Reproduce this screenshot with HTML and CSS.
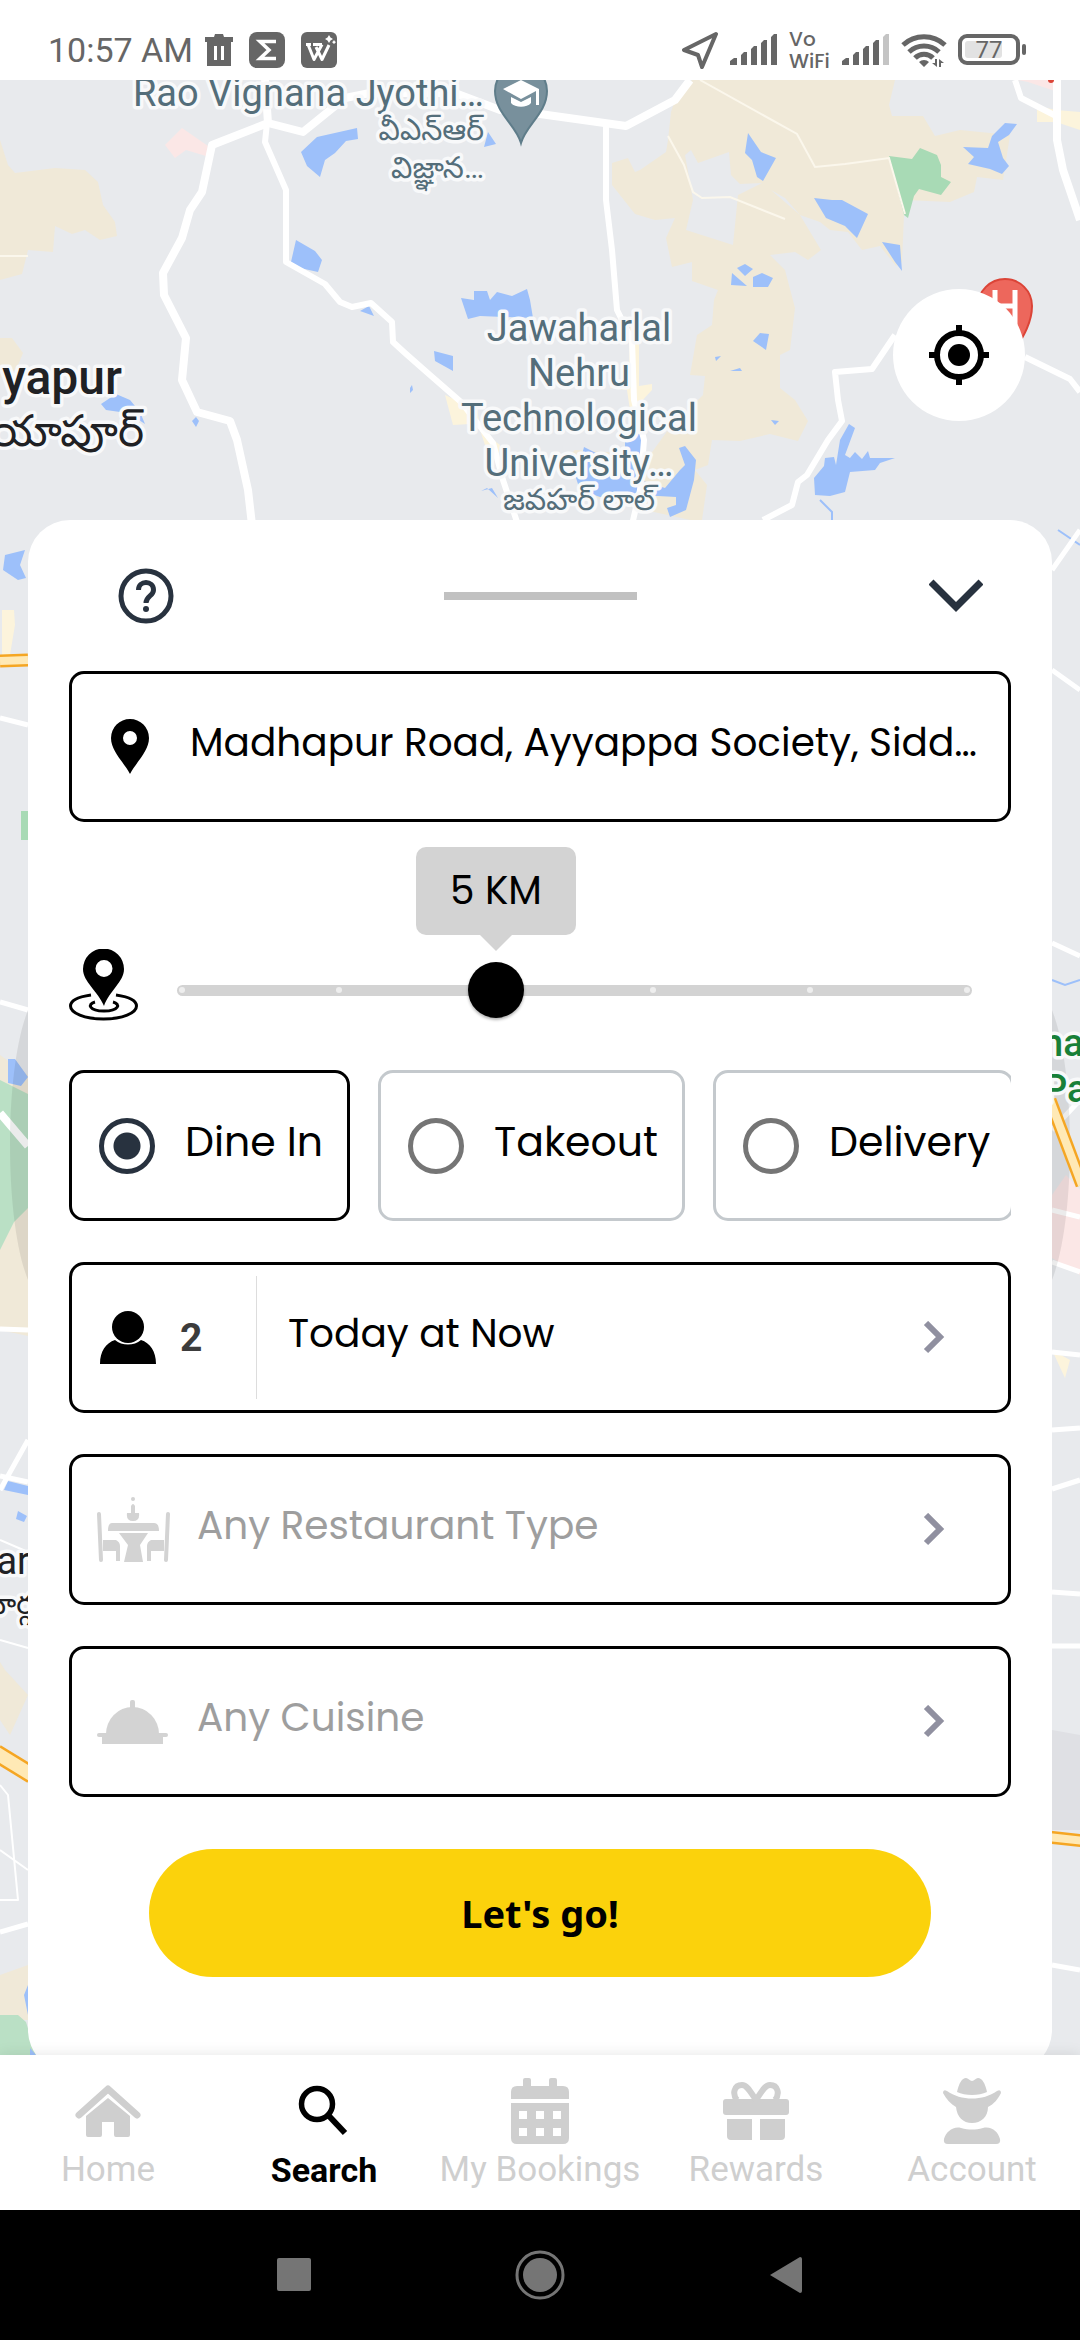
FILE: index.html
```html
<!DOCTYPE html>
<html lang="en">
<head>
<meta charset="utf-8">
<meta name="viewport" content="width=device-width, initial-scale=1">
<title>Search restaurants</title>
<link rel="stylesheet" href="styles.css">
</head>
<body>
<div class="screen">
  <header class="status">
    <div class="status-group">
      <span class="clock">10:57 AM</span>
      <svg class="status-icon" width="28" height="36" viewBox="0 0 28 36"><path fill="#666" d="M10 2h8l1 3h9v5h-2v24H2V10H0V5h9z"/><path stroke="#fff" stroke-width="3" d="M10.500 14v14M17.500 14v14"/></svg>
      <svg class="status-icon" width="36" height="36" viewBox="0 0 36 36"><rect width="36" height="36" rx="8" fill="#666"/><path fill="none" stroke="#fff" stroke-width="3.500" d="M27 9.500H11l9 8.500-9 8.500h16"/></svg>
      <svg class="status-icon" width="36" height="36" viewBox="0 0 36 36"><rect width="36" height="36" rx="6" fill="#666"/><path fill="none" stroke="#fff" stroke-width="3" stroke-linejoin="round" d="M5 12.500h5M7 12.500l6 15L21 12.500M12 12.500h9M15 15l6 12.500L28 13"/><path fill="#fff" d="M28 3l1.500 2.500L32 7l-2.500 1.500L28 11l-1.500-2.500L24 7l2.500-1.500zM33 8l1 1.500L35 10l-1 1-1 1-1-1-1-1 1-.500z"/></svg>
    </div>
    <div class="status-group status-right">
      <svg width="38" height="38" viewBox="0 0 38 38"><path fill="none" stroke="#666" stroke-width="4" stroke-linejoin="round" d="M35 3L3 19l14 5 4 12z"/></svg>
      <svg width="48" height="32" viewBox="0 0 48 32"><path fill="#666" d="M0 31v-4l4-3h3v7zM11 31V21l3-3h3v13zM21 31V15l3-3h3v19zM31 31V9l3-3h3v25zM41 31V3l3-3h3v31z"/></svg>
      <span class="vowifi">Vo<br>WiFi</span>
      <svg width="48" height="32" viewBox="0 0 48 32"><path fill="#666" d="M0 31v-4l4-3h3v7zM11 31V21l3-3h3v13zM21 31V15l3-3h3v19zM31 31V9l3-3h3v25z"/><path fill="#c4c4c4" d="M41 31V3l3-3h3v31z"/></svg>
      <svg width="46" height="36" viewBox="0 0 46 36"><g fill="none" stroke="#666" stroke-width="5"><path d="M2 13a31 31 0 0 1 42 0"/><path d="M8 20a22 22 0 0 1 30 0"/><path d="M14 26a12.500 12.500 0 0 1 18 0"/></g><path fill="#666" d="M23 35l-5-5a7 7 0 0 1 10 0zM31 31h3v-4h2v8zM38 35v-8l5 4h-3v4z"/></svg>
      <svg width="68" height="32" viewBox="0 0 68 32"><rect x="2" y="2" width="58" height="27" rx="7" fill="none" stroke="#666" stroke-width="4"/><rect x="7" y="7" width="37" height="17" rx="3" fill="#e2e2e2"/><rect x="64" y="10" width="4" height="11" rx="2" fill="#666"/><text x="31" y="24" text-anchor="middle" class="battery-text">77</text></svg>
    </div>
  </header>

  <main class="stage">
    <svg class="map" viewBox="0 80 1080 1975" preserveAspectRatio="xMidYMin slice" aria-hidden="true">
      <rect y="80" width="1080" height="1975" fill="#e8eaed"/>
      <g fill="#f0e9d8">
        <path d="M0 140L8 165 15 173 55 168 85 170 98 182 103 205 115 222 117 236 100 240 85 230 72 234 55 226 53 252 28 250 22 274 0 280z"/>
        <path d="M0 338H12L23 353 16 370 0 378z"/>
        <path d="M692 80L675 100 671 112 668 140 666 152 640 170 635 172 628 158 612 163V185L635 214 655 220 675 218 666 238 672 267 692 262V281L718 290 714 300 712 325 697 335 690 375 705 376 703 395 668 430 650 455 575 450 564 460 600 500 690 520H702L707 485 695 470 708 465 712 440 740 441 770 434 798 441 808 421 795 400 780 388V355L790 350 795 308 785 270 770 255 795 252 808 260 821 250 800 215 771 190 785 198 800 215 820 222 830 230 848 232 862 250 880 246 896 266 902 262 904 215 905 200 950 202 974 192 977 177 1003 180 1010 135 960 130 935 136 923 116H892L889 105 895 80z"/>
        <path d="M0 1055L28 1075V1336L0 1330zM0 1662L5 1670 28 1695 10 1735 0 1720zM0 1975L28 1965V2020H0z"/>
      </g>
      <path fill="#e8eaed" d="M685 155L691 150 698 163 729 152 731 175 740 184 762 183 738 195 733 245 686 230 693 200z"/>
      <path fill="#fbe7e6" d="M165 145L182 128 208 146 206 156 186 150 175 158zM1018 80H1058V92L1040 86 1028 82zM1052 1195L1066 1175 1080 1190V1275L1052 1258z"/>
      <path fill="#fcf4dc" d="M1037 106L1056 110V122H1037zM1056 110L1080 112V130L1056 122zM445 395L460 402 475 400 480 425 470 424 453 425zM630 320H639V386L652 384V390L638 405 630 410 627 390 610 388V384H629zM480 430L500 445 498 460 485 445zM2 610H14L15 625 10 655H2zM1052 1350L1070 1360 1065 1378z"/>
      <path fill="#a8dab5" d="M889 156L912 159 920 148 937 155 941 165V177L951 182 941 195 919 189 914 196 908 218 904 215zM21 811H28V840H21z"/>
      <path fill="#bae0c5" d="M0 1080L28 1094V1208L14 1222 0 1250zM0 2015H18L26 2022 36 2055H0z"/>
      <g fill="#9dc0fa">
        <path d="M301 152L317 137 357 128 358 139 346 141 335 153 325 160 320 177 307 166zM488 132L496 144 484 147zM296 240L315 251 322 260 318 272 300 268 291 262z"/>
        <path d="M461 298L474 300V291H487L490 300 497 292 512 296 527 289 530 300 533 318 480 316 468 319zM434 351L453 356V371L435 361zM410 388L412 385 413 390 410 393zM101 404L116 394 130 400 140 412 145 424 136 418 120 412 106 410zM192 421L196 417 199 421 196 427zM360 311L369 306 374 316zM481 491L487 488 498 498 492 488z"/>
        <path d="M748 133L761 152 776 158 763 181 757 177 752 160 745 153zM814 198L832 200H842L868 214 857 238 845 226 826 218zM882 242L900 245 902 271 895 262zM963 147L988 148 992 136 1005 123 1017 124 1009 135 998 142 1003 158 1009 166 1002 174 990 169 968 164 974 157z"/>
        <path d="M737 268L745 264 753 269 745 276zM732 273L747 286 731 285zM753 277L762 273 773 278 768 287H753zM753 341L760 333 769 334 766 350zM715 357L721 356 716 361zM730 371L740 368 742 371zM771 420L779 421 775 425z"/>
        <path d="M625 440L642 432 640 480 665 488 680 470 685 465 679 448 685 446 696 460 694 480 686 510 670 517 667 508 676 505V497L640 495 600 497 580 490 576 478 584 447 600 455 625 455z"/>
        <path d="M849 424L855 428 845 455 850 458 855 452 862 459 868 451 870 458 895 458 880 463 875 470 850 472 845 492 830 496 815 495 814 478 824 466 825 458 834 457 836 465 840 440z"/>
        <path d="M5 555L25 550 20 565 26 578 18 580 3 570zM8 1059H15L28 1077 21 1086 8 1083zM8 1481L28 1486V1495L4 1490zM18 1511L27 1516 24 1522 16 1519zM24 1995L28 1985V2015zM30 2055V2048L36 2055z"/>
      </g>
      <g fill="none" stroke="#9dc0fa" stroke-width="2"><path d="M820 500L832 512V520M1058 530L1080 545M1052 980L1065 985 1080 980"/></g>
      <path fill="#dfe0e4" d="M1052 1730L1080 1735V1830H1052z"/>
      <g fill="none" stroke="#fbf7ec" stroke-width="2">
        <path d="M700 80L797 134 815 167 845 164 889 158 905 214M668 136L684 165 693 192 702 198 730 197 785 219M0 256H28"/>
      </g>
      <g fill="none" stroke="#fff" stroke-linejoin="round">
        <path stroke-width="8" d="M265 80L268 123 212 145 202 192 190 210 182 238 163 273 164 295 186 338 182 380 197 412 230 421 237 440 248 490 252 525M268 123L303 132 345 98 370 93 455 93 500 110 540 114 626 126 675 100 690 80M1057 80V140L1063 170 1080 220M0 1113L28 1146"/>
        <path stroke-width="6" d="M267 123L265 142 286 190V262L325 284 340 302 352 307 371 303 392 322 393 342 405 353 430 375 461 402 475 420 493 443 503 480 518 525M606 126V200L612 250 617 310 632 340 634 400 644 440 640 490 632 525M763 520L792 505 798 482 807 475 828 440 842 421 838 400 835 372 872 369 895 335M1025 357L1070 379 1080 392M1015 80L1021 98 1056 116"/>
        <path stroke-width="5" d="M0 718L28 725M0 1002L28 1010M0 1329L28 1330M0 1490L28 1440M0 1476L28 1482M0 1932L28 1924M1052 570L1080 530M1052 670L1080 690M1052 943L1080 956M1052 1130L1080 1100M1052 1210L1080 1217M1052 1262L1080 1272M1052 1352L1080 1355M1052 1430L1080 1428M1052 1489L1080 1480M1052 1592L1080 1594M1052 1646L1080 1646M1052 1965L1080 1970"/>
        <path stroke-width="2" d="M0 1540L28 1552M0 1640L28 1648M0 1785L8 1795 18 1900H0M0 1850L28 1870"/>
      </g>
      <path fill="#000" fill-opacity=".08" d="M28 1010C4 1070 4 1220 28 1280zM1052 1010C1076 1070 1076 1220 1052 1280z"/>
      <g fill="none">
        <path stroke="#f5a623" stroke-width="13" d="M0 661L28 660"/><path stroke="#ffe9b5" stroke-width="8" d="M0 661L28 660"/>
        <path stroke="#f5a623" stroke-width="18" d="M-4 1753L32 1775"/><path stroke="#ffe9b5" stroke-width="13" d="M-4 1753L32 1775"/>
        <path stroke="#f5a623" stroke-width="13" d="M1048 1837L1084 1841"/><path stroke="#ffe9b5" stroke-width="8" d="M1048 1837L1084 1841"/>
        <path stroke="#f5a623" stroke-width="13" d="M1050 1100L1082 1185"/><path stroke="#ffe9b5" stroke-width="8" d="M1050 1100L1082 1185"/>
      </g>
      <circle cx="1051" cy="80" r="3" fill="#db4437"/>
      <path fill="#78909c" stroke="#5f7d8a" stroke-width="2" d="M521 143c-5-18-26-30-26-52a26 26 0 0 1 52 0c0 22-21 34-26 52z"/>
      <path fill="#fff" d="M503 89l18-9 18 9v16h-3V91l-15 8zM511 97l10 5 10-5v6c-4 5-16 5-20 0z"/>
      <path fill="#ed675c" stroke="#db4437" stroke-width="2" d="M1005 370c-5-18-27-38-27-64a27 27 0 0 1 54 0c0 26-22 46-27 64z"/>
      <path stroke="#fff" stroke-width="5" d="M995 290v32M1015 290v35M995 306h20"/>
      <g class="label label-poi">
        <text x="484" y="106" text-anchor="end">Rao Vignana Jyothi…</text>
        <text x="579" y="341" text-anchor="middle">Jawaharlal</text>
        <text x="579" y="386" text-anchor="middle">Nehru</text>
        <text x="579" y="431" text-anchor="middle">Technological</text>
        <text x="579" y="476" text-anchor="middle">University…</text>
      </g>
      <g class="label label-poi label-telugu">
        <text x="484" y="140" text-anchor="end">వీఎన్ఆర్</text>
        <text x="484" y="178" text-anchor="end">విజ్ఞాన…</text>
        <text x="579" y="510" text-anchor="middle">జవహర్ లాల్</text>
      </g>
      <g class="label label-city">
        <text x="122" y="394" text-anchor="end">yapur</text>
        <text x="144" y="446" text-anchor="end" class="city-telugu">యాపూర్</text>
      </g>
      <g class="label label-area">
        <text x="30" y="1574" text-anchor="end">ar</text>
        <text x="34" y="1614" text-anchor="end" class="area-telugu">నార్గ</text>
      </g>
      <g class="label label-park">
        <text x="1042" y="1056">na</text>
        <text x="1043" y="1102">Par</text>
      </g>
    </svg>

    <button class="locate" type="button" aria-label="My location">
      <svg width="62" height="62" viewBox="0 0 62 62"><circle cx="31" cy="31" r="22" fill="none" stroke="#000" stroke-width="6"/><circle cx="31" cy="31" r="11" fill="#000"/><path stroke="#000" stroke-width="6" d="M31 1v8M31 53v8M1 31h8M53 31h8"/></svg>
    </button>

    <form class="sheet" onsubmit="return false">
      <div class="sheet-head">
        <button class="icon-button" type="button" aria-label="Help">
          <svg width="56" height="56" viewBox="0 0 56 56" fill="none" stroke="#28323f"><circle cx="28" cy="28" r="25" stroke-width="5"/><path stroke-width="5" d="M20.500 22c0-10 15-10 15 0 0 6-7.500 6-7.500 13"/><circle cx="28" cy="41" r="3" fill="#28323f" stroke="none"/></svg>
        </button>
        <span class="handle"></span>
        <button class="icon-button icon-button-end" type="button" aria-label="Collapse">
          <svg width="54" height="34" viewBox="0 0 54 34"><path fill="none" stroke="#28323f" stroke-width="7" d="M2 3l25 25L52 3"/></svg>
        </button>
      </div>

      <button class="field field-address" type="button">
        <svg width="38" height="56" viewBox="0 0 38 56"><path fill="#000" fill-rule="evenodd" d="M19 55C12 42 0 32 0 19a19 19 0 0 1 38 0c0 13-12 23-19 36zM19 12a7 7 0 1 0 0 14 7 7 0 0 0 0-14z"/></svg>
        <span class="field-text">Madhapur Road, Ayyappa Society, Sidd…</span>
      </button>

      <div class="distance">
        <svg class="distance-icon" width="69" height="72" viewBox="0 0 69 72"><g fill="none" stroke="#000" stroke-width="3"><path d="M22 46C8 48 1.500 52 1.500 57c0 7 14 13 33 13s33-6 33-13c0-5-6.500-9-20.500-11"/><path d="M26 53c-8 2-6 9 9 9s17-7 9-9"/></g><path fill="#000" fill-rule="evenodd" d="M35 57C29 42 14 33 14 20a20.500 20.500 0 0 1 41 0c0 13-15 22-20 37zM35 11a8.500 8.500 0 1 0 0 17 8.500 8.500 0 0 0 0-17z"/></svg>
        <div class="slider">
          <div class="rail"><i></i><i></i><i></i><i></i><i></i><i></i></div>
          <input id="distance" type="range" min="0" max="5" step="1" value="2" aria-label="Distance">
          <output class="bubble" for="distance">5 KM</output>
        </div>
      </div>

      <div class="modes">
        <label class="mode mode-first mode-on"><input type="radio" name="mode" checked><span>Dine In</span></label>
        <label class="mode"><input type="radio" name="mode"><span>Takeout</span></label>
        <label class="mode"><input type="radio" name="mode"><span>Delivery</span></label>
      </div>

      <div class="field field-split">
        <button class="guests" type="button">
          <svg width="56" height="54" viewBox="0 0 56 54"><circle cx="28" cy="16" r="16" fill="#000"/><path fill="#000" d="M0 53c0-13 6-21 15-24 7 6 19 6 26 0 9 3 15 11 15 24z"/></svg>
          <span>2</span>
        </button>
        <button class="when" type="button">
          <span class="field-text">Today at Now</span>
          <svg class="chevron" width="22" height="34" viewBox="0 0 22 34"><path d="M3 2l14 14L3 30"/></svg>
        </button>
      </div>

      <button class="field field-empty" type="button">
        <svg width="73" height="65" viewBox="0 0 73 65" fill="#d3d3d3"><circle cx="36" cy="2" r="2"/><path d="M34 9q2-4 4 0v7h4q1 8-6 8t-6-8h4zM15 26h42q5 0 5 8H11q0-8 4-8zM22 36h29l-8 12 3 17H27l4-17z"/><path d="M6 43h13q4 2 4 6v15h-4V54H6zM67 43H54q-4 2-4 6v15h4V54h13z"/><path fill="none" stroke="#d3d3d3" stroke-width="4" stroke-linecap="round" d="M2 17l2 46M71 17l-2 46"/></svg>
        <span class="field-text">Any Restaurant Type</span>
        <svg class="chevron" width="22" height="34" viewBox="0 0 22 34"><path d="M3 2l14 14L3 30"/></svg>
      </button>

      <button class="field field-empty" type="button">
        <svg width="73" height="44" viewBox="0 0 73 44" fill="#d3d3d3"><rect x="33" width="5" height="12" rx="2"/><path d="M9 34a26.500 27 0 0 1 53 0z"/><rect y="33" width="71" height="4" rx="2"/><path d="M5 36h61v8H5z"/></svg>
        <span class="field-text">Any Cuisine</span>
        <svg class="chevron" width="22" height="34" viewBox="0 0 22 34"><path d="M3 2l14 14L3 30"/></svg>
      </button>

      <button class="go" type="submit">Let's go!</button>
    </form>
  </main>

  <nav class="tabs">
    <a class="tab" href="#home">
      <svg width="66" height="66" viewBox="0 0 66 66"><path fill="none" stroke="currentColor" stroke-width="7" stroke-linejoin="round" stroke-linecap="round" d="M4 37l29-26 29 26"/><path fill="currentColor" d="M11 38l22-18 22 18v19q0 2-2 2H41q-2 0-2-2V44H27v13q0 2-2 2H13q-2 0-2-2z"/></svg>
      <span>Home</span>
    </a>
    <a class="tab tab-on" href="#search">
      <svg width="66" height="66" viewBox="0 0 66 66" fill="none" stroke="currentColor"><circle cx="26" cy="26" r="15.500" stroke-width="5.500"/><path stroke-width="6" d="M38 38l16 17"/></svg>
      <span>Search</span>
    </a>
    <a class="tab" href="#bookings">
      <svg width="66" height="66" viewBox="0 0 66 66" fill="currentColor"><path d="M4 21v-7q0-6 6-6h6V2q0-2 2-2h4q2 0 2 2v6h18V2q0-2 2-2h4q2 0 2 2v6h6q6 0 6 6v7z"/><path fill-rule="evenodd" d="M4 25h58v35q0 6-6 6H10q-6 0-6-6zM12 33v8h8v-8zM29 33v8h8v-8zM46 33v8h8v-8zM12 50v8h8v-8zM29 50v8h8v-8zM46 50v8h8v-8z"/></svg>
      <span>My Bookings</span>
    </a>
    <a class="tab" href="#rewards">
      <svg width="66" height="66" viewBox="0 0 66 66" fill="currentColor"><rect y="21" width="66" height="16" rx="3"/><path d="M4 41h25v21H8q-4 0-4-4zM37 41h25v17q0 4-4 4H37z"/><path fill="none" stroke="currentColor" stroke-width="6" d="M33 22C27 13 24 7 19 7 11 7 9 16 14 22M33 22c6-9 9-15 14-15 8 0 10 9 5 15"/></svg>
      <span>Rewards</span>
    </a>
    <a class="tab" href="#account">
      <svg width="66" height="66" viewBox="0 0 66 66" fill="currentColor"><path d="M18 14c2-9 5-14 9-14 2 0 4 3 6 3s4-3 6-3c4 0 7 5 9 14-8 4-22 4-30 0z"/><path d="M4 15q0-4 4-2c14 10 36 10 50 0q4-2 4 2c-3 6-7 11-13 14 0 10-7 16-16 16s-15-6-16-16C12 26 7 21 4 15z"/><path d="M5 61c2-7 9-13 17-11 8 2 14 2 22 0 9-2 15 4 17 11q1 5-4 5H9q-5 0-4-5z"/></svg>
      <span>Account</span>
    </a>
  </nav>

  <footer class="system">
    <button type="button" aria-label="Recent apps"><svg width="34" height="34" viewBox="0 0 34 34"><rect width="34" height="33" rx="2" fill="#757575"/></svg></button>
    <button type="button" aria-label="Home screen"><svg width="50" height="50" viewBox="0 0 50 50"><circle cx="25" cy="25" r="23" fill="none" stroke="#757575" stroke-width="3"/><circle cx="25" cy="25" r="17" fill="#757575"/></svg></button>
    <button type="button" aria-label="Back"><svg width="34" height="38" viewBox="0 0 34 38"><path fill="#757575" d="M1 19L31 1q2 0 2 2v32q0 2-2 2z"/></svg></button>
  </footer>
</div>
</body>
</html>
```

FILE: styles.css
```css
* {
  box-sizing: border-box;
}

body {
  margin: 0;
  font-family: Roboto, "Noto Sans", sans-serif;
  background: #fff;
}

button {
  margin: 0;
  padding: 0;
  border: 0;
  background: none;
  color: inherit;
  font: inherit;
  text-align: left;
  cursor: pointer;
}

svg {
  display: block;
  flex: none;
}

.screen {
  display: flex;
  flex-direction: column;
  min-height: 100vh;
}

/* Status bar */

.status {
  display: flex;
  justify-content: space-between;
  align-items: center;
  height: 80px;
  padding: 20px 54px 0 48px;
  color: #666;
}

.status-group {
  display: flex;
  align-items: center;
  gap: 12px;
}

.status-right {
  gap: 11px;
}

.status-icon + .status-icon {
  margin-left: 4px;
}

.clock {
  font-size: 34px;
}

.vowifi {
  width: 42px;
  font: 500 20px/22px Poppins, Roboto, sans-serif;
}

.battery-text {
  font: 400 24px Roboto, sans-serif;
  fill: #666;
}

/* Map backdrop */

.stage {
  position: relative;
  flex: 1;
  padding: 440px 28px 0;
  overflow: hidden;
}

.map {
  position: absolute;
  inset: 0;
  width: 100%;
  height: 100%;
}

.label {
  font-family: Roboto, "Noto Sans Telugu", "Noto Sans", sans-serif;
  stroke: #f8f9fa;
  stroke-width: 7px;
  stroke-linejoin: round;
  paint-order: stroke;
}

.label-poi {
  font-size: 38px;
  fill: #546e7a;
}

.label-telugu {
  font-size: 30px;
}

.label-city {
  font-size: 48px;
  font-weight: 500;
  fill: #202124;
}

.city-telugu {
  font-size: 44px;
  font-weight: 400;
}

.label-area {
  font-size: 38px;
  fill: #202124;
}

.area-telugu {
  font-size: 30px;
}

.label-park {
  font-size: 38px;
  font-weight: 500;
  fill: #188038;
}

.locate {
  position: absolute;
  top: 209px;
  right: 55px;
  display: grid;
  place-items: center;
  width: 132px;
  height: 132px;
  border-radius: 50%;
  background: #fff;
}

/* Search sheet */

.sheet {
  position: relative;
  display: flex;
  flex-direction: column;
  gap: 41px;
  margin-bottom: -17px;
  padding: 0 41px 95px;
  border-radius: 42px;
  background: #fff;
  color: #000;
  font-family: Poppins, Inter, sans-serif;
  font-size: 39px;
}

.sheet-head {
  display: grid;
  grid-template-columns: 1fr auto 1fr;
  align-items: center;
  height: 151px;
  margin-bottom: -41px;
  padding: 0 28px 0 49px;
}

.icon-button {
  justify-self: start;
}

.icon-button-end {
  justify-self: end;
}

.handle {
  width: 193px;
  height: 8px;
  margin-right: 21px;
  background: #c1c1c1;
}

.field {
  display: flex;
  align-items: center;
  height: 151px;
  padding: 0 63px 0 25px;
  border: 3px solid #000;
  border-radius: 15px;
}

.field-text {
  flex: 1;
  padding-bottom: 8px;
  overflow: hidden;
  white-space: nowrap;
}

.field-address {
  gap: 41px;
  padding: 0 20px 0 39px;
}

.field-empty {
  gap: 27px;
  color: #9e9e9e;
}

.chevron path {
  fill: none;
  stroke: #9090a0;
  stroke-width: 6px;
}

.field-split {
  padding-left: 0;
}

.guests {
  display: flex;
  align-items: center;
  gap: 24px;
  width: 185px;
  height: 123px;
  padding-left: 28px;
  border-right: 1px solid #ddd;
  color: #3c3c3c;
  font: 700 39px Roboto, sans-serif;
}

.when {
  display: flex;
  flex: 1;
  align-items: center;
  padding-left: 31px;
}

/* Distance slider */

.distance {
  display: flex;
  align-items: center;
  gap: 16px;
  height: 166px;
  padding: 88px 16px 0 0;
}

.distance-icon {
  margin-bottom: 11px;
}

.slider {
  position: relative;
  display: grid;
  flex: 1;
  align-items: center;
}

.rail,
.slider input {
  grid-area: 1 / 1;
}

.rail {
  display: flex;
  justify-content: space-between;
  align-items: center;
  height: 11px;
  margin: 0 23px;
  padding: 0 2px;
  border-radius: 6px;
  background: #d3d3d3;
}

.rail i {
  width: 6px;
  height: 6px;
  border-radius: 50%;
  background: #eee;
}

.slider input {
  width: 100%;
  height: 56px;
  margin: 0;
  appearance: none;
  background: none;
}

.slider input::-webkit-slider-thumb {
  appearance: none;
  width: 56px;
  height: 56px;
  border-radius: 50%;
  background: #000;
  box-shadow: 0 2px 3px rgba(0, 0, 0, 0.3);
}

.bubble {
  position: absolute;
  bottom: 83px;
  left: calc(28px + (100% - 56px) * 0.4);
  width: 160px;
  height: 88px;
  border-radius: 10px;
  background: #d3d3d3;
  line-height: 88px;
  text-align: center;
  transform: translateX(-50%);
}

.bubble::after {
  position: absolute;
  top: 100%;
  left: 64px;
  border: 16px solid transparent;
  border-top-color: #d3d3d3;
  border-bottom: 0;
  content: "";
}

/* Dining mode */

.modes {
  display: flex;
  gap: 28px;
  overflow: hidden;
}

.mode {
  display: flex;
  flex: none;
  align-items: center;
  gap: 30px;
  width: 307px;
  height: 151px;
  padding-left: 27px;
  border: 3px solid #c4c9cd;
  border-radius: 15px;
  font-size: 41px;
  white-space: nowrap;
}

.mode:last-child {
  width: 301px;
}

.mode-first {
  width: 281px;
}

.mode-on {
  border-color: #000;
}

.mode span {
  padding-bottom: 9px;
}

.mode input {
  flex: none;
  width: 56px;
  height: 56px;
  margin: 0;
  appearance: none;
  border: 5px solid #757575;
  border-radius: 50%;
}

.mode input:checked {
  border-color: #28323f;
  background: radial-gradient(circle, #28323f 13px, transparent 14px);
}

.go {
  align-self: center;
  width: 83%;
  height: 128px;
  margin-top: 11px;
  border-radius: 64px;
  background: #fbd20c;
  font: 700 38px "Noto Sans", "Open Sans", sans-serif;
  text-align: center;
}

/* Bottom tabs */

.tabs {
  position: relative;
  display: flex;
  height: 155px;
  padding-top: 23px;
  background: #fff;
  box-shadow: 0 0 14px rgba(0, 0, 0, 0.1);
}

.tab {
  display: flex;
  flex: 1 1 0;
  flex-direction: column;
  align-items: center;
  gap: 6px;
  color: #cfcfcf;
  font-size: 35px;
  line-height: 40px;
  text-decoration: none;
  white-space: nowrap;
}

.tab-on {
  color: #000;
  font-size: 34px;
  font-weight: 700;
}

/* System navigation */

.system {
  display: flex;
  justify-content: center;
  align-items: center;
  gap: 204px;
  height: 130px;
  background: #000;
}
```
